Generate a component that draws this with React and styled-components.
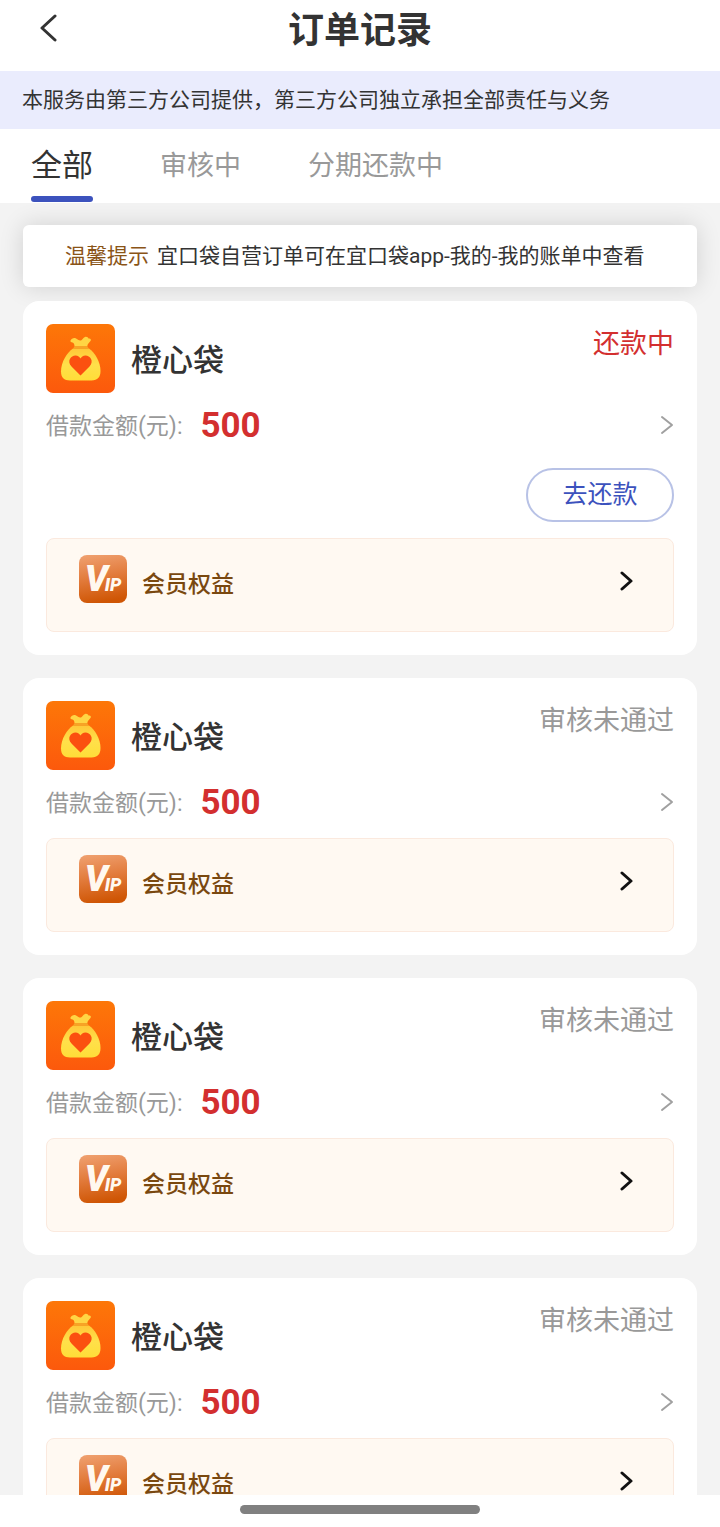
import React, { useState } from 'react';
import styled, { createGlobalStyle } from 'styled-components';

const TEXT = '#333333';
const GREY = '#999999';
const RED = '#d32f2f';
const BLUE = '#3c52bd';
const BROWN = '#7a480f';

const TABS = ['全部', '审核中', '分期还款中'];

const ORDERS = [
	{ id: 1, name: '橙心袋', amount: 500, status: '还款中', repaying: true },
	{ id: 2, name: '橙心袋', amount: 500, status: '审核未通过' },
	{ id: 3, name: '橙心袋', amount: 500, status: '审核未通过' },
	{ id: 4, name: '橙心袋', amount: 500, status: '审核未通过' },
];

function Chevron({ width, height, color, stroke, left }) {
	return (
		<svg width={width} height={height} viewBox={`0 0 ${width} ${height}`} fill="none" aria-hidden="true">
			<path
				d={
					left
						? `M${width - 2} 2L2 ${height / 2}L${width - 2} ${height - 2}`
						: `M2 2L${width - 2} ${height / 2}L2 ${height - 2}`
				}
				stroke={color}
				strokeWidth={stroke}
				strokeLinecap="round"
				strokeLinejoin="round"
			/>
		</svg>
	);
}

function BagLogo() {
	return (
		<svg width="69" height="69" viewBox="0 0 69 69" aria-hidden="true">
			<defs>
				<linearGradient id="bagBack" x1="0" y1="0" x2="0" y2="1">
					<stop offset="0" stopColor="#fd7708" />
					<stop offset="1" stopColor="#fc590c" />
				</linearGradient>
				<linearGradient id="bagBody" x1="0" y1="0" x2="0" y2="1">
					<stop offset="0" stopColor="#ffc838" />
					<stop offset="0.5" stopColor="#ffe04a" />
					<stop offset="1" stopColor="#ffde38" />
				</linearGradient>
			</defs>
			<rect width="69" height="69" rx="7" fill="url(#bagBack)" />
			<path
				d="M24.500 16.500C25.500 14.500 28 13.500 30 14.500C31.500 15.300 33 17 35 16.500C36.500 15.800 37 13.500 39 13C41 12.500 42 13.500 42.500 14.500C44.500 14 45.500 15.500 44.500 17C43.500 18.500 41.500 19.500 41.200 22.500H28.500C28.500 20.500 28 19 26.500 18.500C25 18.200 24 17.500 24.500 16.500Z"
				fill="#ffd544"
			/>
			<path
				d="M27 24.500H43C49 28.500 54.500 38 54.500 47C54.500 53 51.500 56.500 45.500 56.500H24C18 56.500 15 53.500 15 47.500C15 38 21 28.500 27 24.500Z"
				fill="url(#bagBody)"
			/>
			<path d="M28.500 22.300H41.300L43 24.700H27Z" fill="#f6a526" />
			<path
				d="M34.500 51.500L25.500 42.500C20.500 37 25 31.500 29.500 31.500C32 31.500 33.700 33 34.500 34.500C35.300 33 37 31.500 39.500 31.500C44 31.500 48.500 37 43.500 42.500Z"
				fill="#fb5010"
			/>
		</svg>
	);
}

function OrderCard({ order }) {
	return (
		<Card>
			<CardHead>
				<BagLogo />
				<ProductName>{order.name}</ProductName>
				<Status $active={order.repaying}>{order.status}</Status>
			</CardHead>
			<AmountRow href="#order">
				<AmountLabel>借款金额(元):</AmountLabel>
				<Amount>{order.amount}</Amount>
				<Chevron width={14} height={20} color="#a0a0a0" stroke={2} />
			</AmountRow>
			{order.repaying && (
				<Actions>
					<RepayButton type="button">去还款</RepayButton>
				</Actions>
			)}
			<Benefits href="#vip">
				<VipBadge>
					<VipBig>V</VipBig>
					<VipSmall>IP</VipSmall>
				</VipBadge>
				<BenefitsText>会员权益</BenefitsText>
				<BenefitsArrow>
					<Chevron width={13} height={20} color="#111111" stroke={3} />
				</BenefitsArrow>
			</Benefits>
		</Card>
	);
}

export default function App() {
	const [activeTab, setActiveTab] = useState(TABS[0]);

	return (
		<Page>
			<GlobalStyle />
			<Header>
				<BackButton type="button" aria-label="返回">
					<Chevron width={17} height={28} color={TEXT} stroke={3} left />
				</BackButton>
				<Title>订单记录</Title>
			</Header>
			<Notice>本服务由第三方公司提供，第三方公司独立承担全部责任与义务</Notice>
			<Tabs>
				{TABS.map(tab => (
					<Tab key={tab} type="button" $active={tab === activeTab} onClick={() => setActiveTab(tab)}>
						{tab}
					</Tab>
				))}
			</Tabs>
			<Content>
				<Tip>
					<TipLabel>温馨提示</TipLabel>
					<span>宜口袋自营订单可在宜口袋app-我的-我的账单中查看</span>
				</Tip>
				<OrderList>
					{ORDERS.map(order => (
						<OrderCard key={order.id} order={order} />
					))}
				</OrderList>
			</Content>
			<HomeBar>
				<HomeIndicator />
			</HomeBar>
		</Page>
	);
}

const GlobalStyle = createGlobalStyle`
	* {
		box-sizing: border-box;
	}

	body {
		margin: 0;
		background: #ffffff;
		color: ${TEXT};
		font-family: Roboto, 'Noto Sans CJK SC', sans-serif;
	}

	button {
		padding: 0;
		border: 0;
		background: none;
		font-family: inherit;
		cursor: pointer;
	}

	a {
		color: inherit;
		text-decoration: none;
	}

	svg {
		display: block;
		flex-shrink: 0;
	}
`;

const Page = styled.div`
	display: flex;
	flex-direction: column;
	height: 100vh;
`;

const Header = styled.header`
	display: grid;
	grid-template-columns: 80px 1fr 80px;
	align-items: start;
	flex-shrink: 0;
	height: 71px;
`;

const BackButton = styled.button`
	display: flex;
	align-items: center;
	height: 56px;
	padding-left: 40px;
`;

const Title = styled.h1`
	margin: 0;
	font-size: 36px;
	line-height: 63px;
	font-weight: 700;
	text-align: center;
`;

const Notice = styled.div`
	flex-shrink: 0;
	padding: 1px 22px 0;
	background: #eaecfd;
	font-size: 21px;
	line-height: 57px;
`;

const Tabs = styled.nav`
	display: flex;
	flex-shrink: 0;
	gap: 67px;
	height: 74px;
	padding: 0 31px;
`;

const Tab = styled.button`
	display: flex;
	flex-direction: column;
	color: ${props => (props.$active ? TEXT : GREY)};
	font-size: ${props => (props.$active ? 31 : 27)}px;
	line-height: 74px;

	&::after {
		content: '';
		width: 100%;
		height: 6px;
		margin-top: -7px;
		border-radius: 3px;
		background: ${props => (props.$active ? BLUE : 'transparent')};
	}
`;

const Content = styled.main`
	flex: 1;
	min-height: 0;
	padding: 22px 23px;
	background: #f3f3f3;
	overflow: hidden;
`;

const Tip = styled.div`
	display: flex;
	gap: 8px;
	margin-bottom: 14px;
	padding: 0 42px;
	border-radius: 6px;
	background: #ffffff;
	box-shadow: 0 0 24px rgba(0, 0, 0, 0.14);
	font-size: 21px;
	line-height: 62px;
	white-space: nowrap;
`;

const TipLabel = styled.span`
	color: #8a5417;
`;

const OrderList = styled.div`
	position: relative;
	display: flex;
	flex-direction: column;
	gap: 23px;
`;

const Card = styled.article`
	padding: 23px;
	border-radius: 16px;
	background: #ffffff;
`;

const CardHead = styled.div`
	display: flex;
	align-items: flex-start;
	gap: 16px;
	height: 69px;
`;

const ProductName = styled.h2`
	flex: 1;
	margin: 0;
	font-size: 31px;
	line-height: 73px;
	font-weight: 500;
`;

const Status = styled.span`
	color: ${props => (props.$active ? RED : GREY)};
	font-size: 27px;
	line-height: 40px;
`;

const AmountRow = styled.a`
	display: flex;
	align-items: center;
	height: 64px;
`;

const AmountLabel = styled.span`
	padding-top: 4px;
	color: ${GREY};
	font-size: 23px;
	line-height: 32px;
`;

const Amount = styled.strong`
	flex: 1;
	margin-left: 18px;
	padding-top: 2px;
	color: ${RED};
	font-size: 35px;
	font-weight: 700;
	line-height: 40px;
`;

const Actions = styled.div`
	display: flex;
	justify-content: flex-end;
	padding: 11px 0 12px;
`;

const RepayButton = styled.button`
	width: 148px;
	height: 54px;
	border: 2px solid #b8c2e6;
	border-radius: 27px;
	color: ${BLUE};
	font-size: 25px;
	line-height: 48px;
`;

const Benefits = styled.a`
	display: flex;
	align-items: flex-end;
	height: 94px;
	margin-top: 4px;
	padding: 0 40px 28px 32px;
	border: 1px solid #fbe9de;
	border-radius: 8px;
	background: #fff9f2;
`;

const VipBadge = styled.span`
	display: flex;
	align-items: baseline;
	justify-content: center;
	width: 48px;
	height: 48px;
	border-radius: 8px;
	background: linear-gradient(170deg, #f0a272 0%, #e27b3c 45%, #cf5605 90%);
	color: #fff8ef;
	font-style: italic;
	font-weight: 900;
	line-height: 48px;
`;

const VipBig = styled.span`
	font-size: 36px;
`;

const VipSmall = styled.span`
	margin-left: -3px;
	font-size: 18px;
`;

const BenefitsText = styled.span`
	flex: 1;
	margin-left: 15px;
	color: ${BROWN};
	font-size: 23px;
	font-weight: 500;
	line-height: 36px;
`;

const BenefitsArrow = styled.span`
	display: flex;
	align-items: center;
	height: 44px;
`;

const HomeBar = styled.footer`
	display: flex;
	justify-content: center;
	align-items: center;
	flex-shrink: 0;
	height: 32px;
	padding-bottom: 4px;
	background: #ffffff;
`;

const HomeIndicator = styled.div`
	width: 240px;
	height: 9px;
	border-radius: 5px;
	background: #808080;
`;
